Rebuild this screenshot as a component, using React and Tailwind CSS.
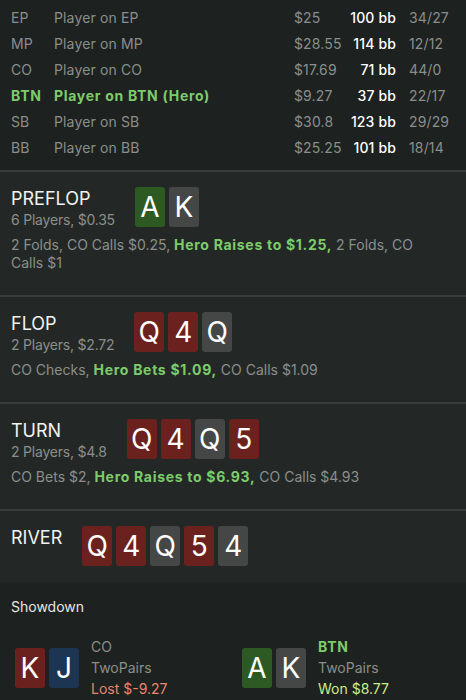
import React from "react";

const players = [
  { pos: "EP", name: "Player on EP", money: "$25", bb: "100 bb", ratio: "34/27" },
  { pos: "MP", name: "Player on MP", money: "$28.55", bb: "114 bb", ratio: "12/12" },
  { pos: "CO", name: "Player on CO", money: "$17.69", bb: "71 bb", ratio: "44/0" },
  { pos: "BTN", name: "Player on BTN (Hero)", money: "$9.27", bb: "37 bb", ratio: "22/17", hero: true },
  { pos: "SB", name: "Player on SB", money: "$30.8", bb: "123 bb", ratio: "29/29" },
  { pos: "BB", name: "Player on BB", money: "$25.25", bb: "101 bb", ratio: "18/14" },
];

const suitBg = {
  h: "bg-[#6b221e]",
  s: "bg-[#454746]",
  c: "bg-[#2d5a22]",
  d: "bg-[#1c3553]",
};

function Card({ rank, suit }) {
  return (
    <div
      className={`w-[30px] h-[40px] rounded-[3px] flex items-center justify-center text-[28px] text-white leading-none ${suitBg[suit]}`}
    >
      {rank}
    </div>
  );
}

function Cards({ cards }) {
  return (
    <div className="flex gap-[4px]">
      {cards.map((c, i) => (
        <Card key={i} rank={c[0]} suit={c[1]} />
      ))}
    </div>
  );
}

function Street({ title, sub, cards, children, last }) {
  return (
    <div
      className={`bg-[#232826] px-[11px] pt-[15px] ${last ? "pb-[16px]" : "pb-[23px] border-b-2 border-[#383d3a]"}`}
    >
      <div className="flex gap-5">
        <div>
          <div className="text-[18px] leading-[24px] text-[#f2f2f2]">{title}</div>
          {sub && (
            <div className="text-[14px] leading-[18px] tracking-[-0.015em] text-[#8b8e8c]">{sub}</div>
          )}
        </div>
        <Cards cards={cards} />
      </div>
      {children && (
        <p className="mt-[7px] pr-[30px] text-[14px] leading-[18px] text-[#8b8e8c]">{children}</p>
      )}
    </div>
  );
}

function Hero({ children }) {
  return <span className="font-bold tracking-[0.05em] text-[#7dcc6b]">{children}</span>;
}

export default function App() {
  return (
    <div
      className="w-[466px] h-[700px] overflow-hidden bg-[#1d211f]"
      style={{ fontFamily: "Inter, 'Liberation Sans', sans-serif" }}
    >
      {/* Players */}
      <div className="px-[11px] pt-[4px] pb-[10px] border-b-2 border-[#383d3a] text-[14px] tracking-[0.01em]">
        {players.map((p) => (
          <div key={p.pos} className="flex h-[26px] items-center">
            <div className={`w-[43px] ${p.hero ? "font-bold tracking-[0.05em] text-[#7dcc6b]" : "text-[#8b8e8c]"}`}>{p.pos}</div>
            <div className={`flex-1 ${p.hero ? "font-bold tracking-[0.05em] text-[#7dcc6b]" : "text-[#8b8e8c]"}`}>{p.name}</div>
            <div className="w-[56px] text-[#8b8e8c]">{p.money}</div>
            <div className="w-[46px] text-right font-medium text-white">{p.bb}</div>
            <div className="w-[59px] pl-[13px] text-[#8b8e8c]">{p.ratio}</div>
          </div>
        ))}
      </div>

      <Street title="PREFLOP" sub="6 Players, $0.35" cards={["Ac", "Ks"]}>
        <span>2 Folds, CO Calls $0.25, </span>
        <Hero>Hero Raises to $1.25,</Hero> <span>2 Folds, CO</span> <span>Calls $1</span>
      </Street>

      <Street title="FLOP" sub="2 Players, $2.72" cards={["Qh", "4h", "Qs"]}>
        CO Checks, <Hero>Hero Bets $1.09,</Hero> CO Calls $1.09
      </Street>

      <Street title="TURN" sub="2 Players, $4.8" cards={["Qh", "4h", "Qs", "5h"]}>
        CO Bets $2, <Hero>Hero Raises to $6.93,</Hero> CO Calls $4.93
      </Street>

      <Street title="RIVER" cards={["Qh", "4h", "Qs", "5h", "4s"]} last />

      {/* Showdown */}
      <div className="pt-[15px]">
        <div className="px-[11px] text-[14px] leading-[20px] text-[#e6e6e6]">Showdown</div>
        <div className="grid grid-cols-2 gap-x-[18px] px-[15px] mt-[19px]">
          <div className="flex items-center gap-3">
            <Cards cards={["Kh", "Jd"]} />
            <div className="text-[14px] leading-[21px]">
              <div className="text-[#8b8e8c]">CO</div>
              <div className="text-[#8b8e8c]">TwoPairs</div>
              <div className="text-[#e8866f]">Lost $-9.27</div>
            </div>
          </div>
          <div className="flex items-center gap-3">
            <Cards cards={["Ac", "Ks"]} />
            <div className="text-[14px] leading-[21px]">
              <div className="font-bold tracking-[0.05em] text-[#7dcc6b]">BTN</div>
              <div className="text-[#8b8e8c]">TwoPairs</div>
              <div className="text-[#cbec8c]">Won $8.77</div>
            </div>
          </div>
        </div>
      </div>
    </div>
  );
}
